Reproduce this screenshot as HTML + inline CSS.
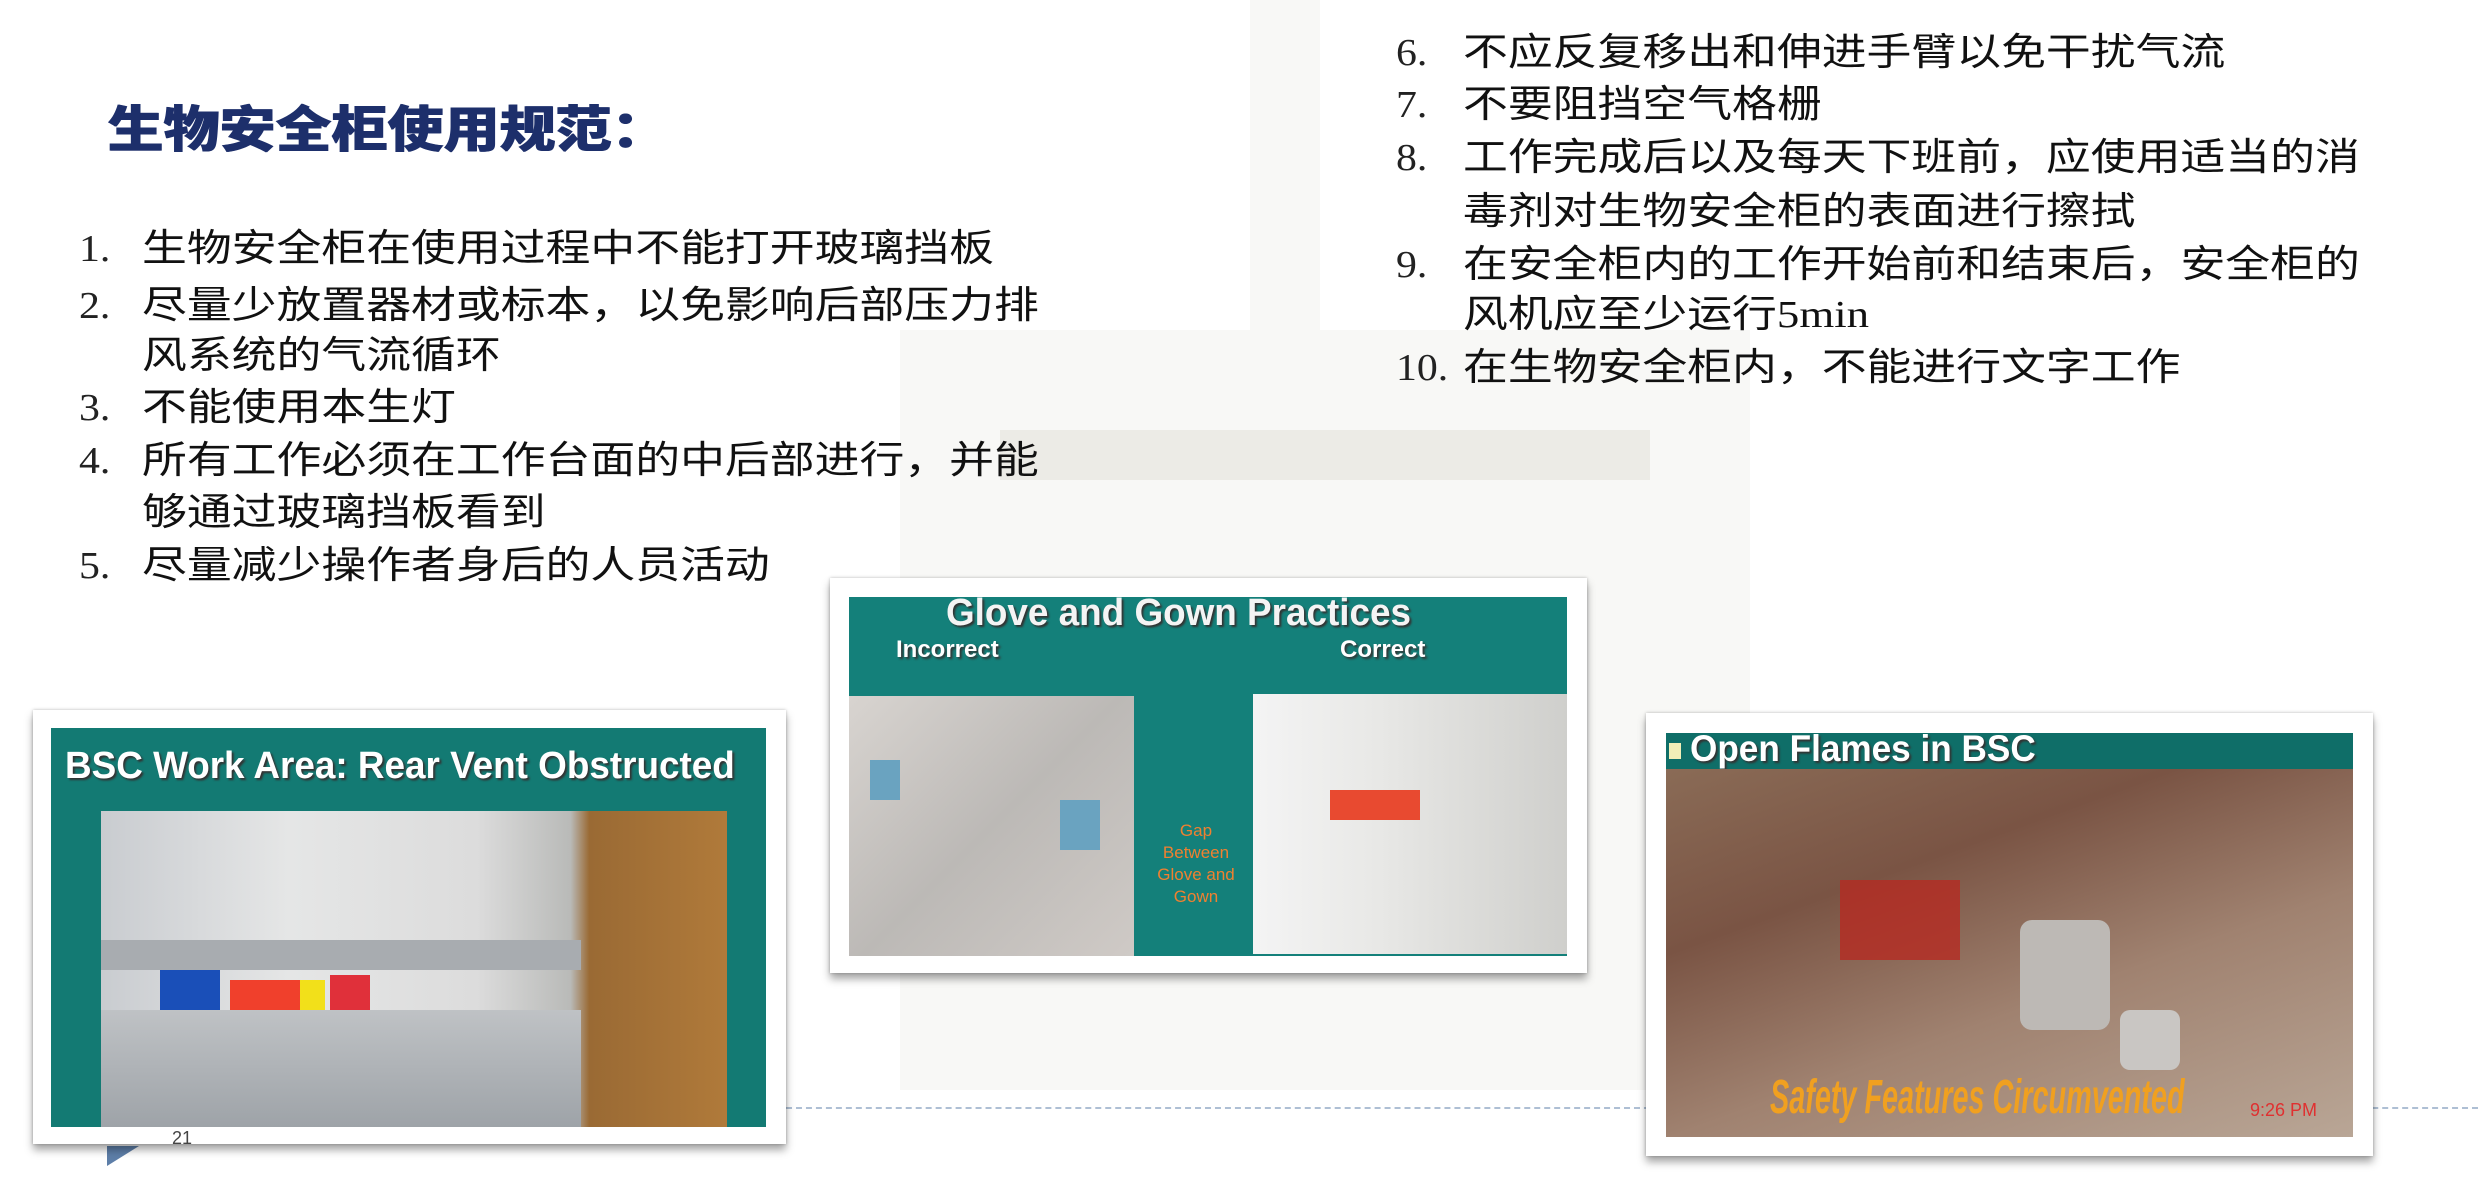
<!DOCTYPE html>
<html><head><meta charset="utf-8"><style>
body{margin:0;width:2478px;height:1178px;background:#fff;position:relative;overflow:hidden;font-family:"Liberation Sans","Noto Sans CJK SC",sans-serif;}
.wm{position:absolute;background:#f5f5f2;}
.t{position:absolute;white-space:nowrap;font-size:38px;color:#111;transform:scaleX(1.18);transform-origin:left center;line-height:52px;}
.n{position:absolute;font-family:"Liberation Serif",serif;font-size:38px;color:#222;line-height:52px;transform:scaleX(1.1);transform-origin:left center;}
.frame{position:absolute;background:#fff;box-shadow:0 6px 8px rgba(0,0,0,.35),0 0 3px rgba(0,0,0,.25);}
.teal{position:absolute;background:#137a73;}
.h{position:absolute;color:#fff;font-weight:bold;white-space:nowrap;text-shadow:2px 2px 2px #333;transform-origin:left center;}
</style></head><body>
<!-- faint watermark -->
<div class="wm" style="left:900px;top:330px;width:850px;height:760px;opacity:.7"></div>
<div class="wm" style="left:1250px;top:0;width:70px;height:330px;opacity:.7"></div>
<div class="wm" style="left:1000px;top:430px;width:650px;height:50px;background:#ecebe6"></div>

<div style="position:absolute;left:107px;top:90px;font-size:50px;font-weight:900;color:#1d2f6b;white-space:nowrap;transform:scaleX(1.12);transform-origin:left;text-shadow:1px 0 0 #1d2f6b;">生物安全柜使用规范：</div>

<div class="n" style="left:79px;top:223px">1.</div><div class="t" style="left:142px;top:223px">生物安全柜在使用过程中不能打开玻璃挡板</div>
<div class="n" style="left:79px;top:280px">2.</div><div class="t" style="left:142px;top:280px">尽量少放置器材或标本，以免影响后部压力排</div>
<div class="t" style="left:142px;top:330px">风系统的气流循环</div>
<div class="n" style="left:79px;top:382px">3.</div><div class="t" style="left:142px;top:382px">不能使用本生灯</div>
<div class="n" style="left:79px;top:435px">4.</div><div class="t" style="left:142px;top:435px">所有工作必须在工作台面的中后部进行，并能</div>
<div class="t" style="left:142px;top:487px">够通过玻璃挡板看到</div>
<div class="n" style="left:79px;top:540px">5.</div><div class="t" style="left:142px;top:540px">尽量减少操作者身后的人员活动</div>

<div class="n" style="left:1396px;top:27px">6.</div><div class="t" style="left:1463px;top:27px">不应反复移出和伸进手臂以免干扰气流</div>
<div class="n" style="left:1396px;top:79px">7.</div><div class="t" style="left:1463px;top:79px">不要阻挡空气格栅</div>
<div class="n" style="left:1396px;top:132px">8.</div><div class="t" style="left:1463px;top:132px">工作完成后以及每天下班前，应使用适当的消</div>
<div class="t" style="left:1463px;top:186px">毒剂对生物安全柜的表面进行擦拭</div>
<div class="n" style="left:1396px;top:239px">9.</div><div class="t" style="left:1463px;top:239px">在安全柜内的工作开始前和结束后，安全柜的</div>
<div class="t" style="left:1463px;top:289px">风机应至少运行<span style="font-family:'Liberation Serif',serif">5min</span></div>
<div class="n" style="left:1396px;top:342px">10.</div><div class="t" style="left:1463px;top:342px">在生物安全柜内，不能进行文字工作</div>

<!-- dashed line -->
<div style="position:absolute;left:786px;top:1107px;width:1692px;border-top:2px dashed #aebfd4"></div>
<div style="position:absolute;left:107px;top:1146px;width:0;height:0;border-left:32px solid #5d7ea8;border-bottom:20px solid transparent"></div>

<!-- BSC frame -->
<div class="frame" style="left:33px;top:710px;width:753px;height:434px"></div>
<div class="teal" style="left:51px;top:728px;width:715px;height:399px"></div>
<div class="h" style="left:65px;top:745px;font-size:38px;transform:scaleX(.97)">BSC Work Area: Rear Vent Obstructed</div>
<div style="position:absolute;left:101px;top:811px;width:626px;height:316px;background:linear-gradient(90deg,#c9ccd0 0%,#e5e6e6 30%,#dcdcdc 60%,#b9bab8 75%,#9a6a34 78%,#b07a3a 100%)"></div>
<div style="position:absolute;left:101px;top:940px;width:480px;height:30px;background:#a8acb0"></div>
<div style="position:absolute;left:101px;top:1010px;width:480px;height:117px;background:linear-gradient(#bfc2c5,#9ea3a8)"></div>
<div style="position:absolute;left:160px;top:970px;width:60px;height:40px;background:#1a4fb8"></div>
<div style="position:absolute;left:230px;top:980px;width:70px;height:30px;background:#f0402c"></div>
<div style="position:absolute;left:300px;top:980px;width:25px;height:30px;background:#f2e01a"></div>
<div style="position:absolute;left:330px;top:975px;width:40px;height:35px;background:#e0303a"></div>
<div style="position:absolute;left:172px;top:1128px;font-size:18px;color:#444">21</div>

<!-- Glove frame -->
<div class="frame" style="left:830px;top:578px;width:757px;height:395px"></div>
<div class="teal" style="left:849px;top:597px;width:718px;height:359px;background:#14807a"></div>
<div class="h" style="left:946px;top:592px;font-size:38px;color:#f4f4f4;transform:scaleX(.97)">Glove and Gown Practices</div>
<div class="h" style="left:896px;top:636px;font-size:24px;">Incorrect</div>
<div class="h" style="left:1340px;top:636px;font-size:24px;">Correct</div>
<div style="position:absolute;left:849px;top:696px;width:285px;height:260px;background:linear-gradient(135deg,#d8d4d0,#bcb9b6 50%,#cfcac6)"></div>
<div style="position:absolute;left:870px;top:760px;width:30px;height:40px;background:#6aa3c0"></div>
<div style="position:absolute;left:1060px;top:800px;width:40px;height:50px;background:#6aa3c0"></div>
<div style="position:absolute;left:1138px;top:820px;width:116px;text-align:center;color:#f08030;font-size:17px;line-height:22px">Gap<br>Between<br>Glove and<br>Gown</div>
<div style="position:absolute;left:1253px;top:694px;width:314px;height:260px;background:linear-gradient(90deg,#f4f4f4 0%,#e8e8e6 40%,#cfcfcc 100%)"></div>
<div style="position:absolute;left:1330px;top:790px;width:90px;height:30px;background:#e84a30"></div>

<!-- Open flames frame -->
<div class="frame" style="left:1646px;top:713px;width:727px;height:443px"></div>
<div class="teal" style="left:1666px;top:733px;width:687px;height:36px;background:#0f6e68"></div>
<div style="position:absolute;left:1669px;top:743px;width:12px;height:16px;background:#f2eeb8"></div>
<div class="h" style="left:1690px;top:728px;font-size:37px;transform:scaleX(.95)">Open Flames in BSC</div>
<div style="position:absolute;left:1666px;top:769px;width:687px;height:368px;background:linear-gradient(160deg,#8a6b56 0%,#7a5444 30%,#a08270 60%,#b9a696 100%)"></div>
<div style="position:absolute;left:1840px;top:880px;width:120px;height:80px;background:#b52a22;opacity:.8"></div>
<div style="position:absolute;left:2020px;top:920px;width:90px;height:110px;background:#bdb9b5;border-radius:12px"></div>
<div style="position:absolute;left:2120px;top:1010px;width:60px;height:60px;background:#c9c6c3;border-radius:10px"></div>
<div class="h" style="left:1770px;top:1070px;font-size:48px;font-style:italic;color:#f0a020;text-shadow:none;transform:scaleX(.6)">Safety Features Circumvented</div>
<div style="position:absolute;left:2250px;top:1100px;font-size:18px;color:#e03030">9:26 PM</div>
</body></html>
